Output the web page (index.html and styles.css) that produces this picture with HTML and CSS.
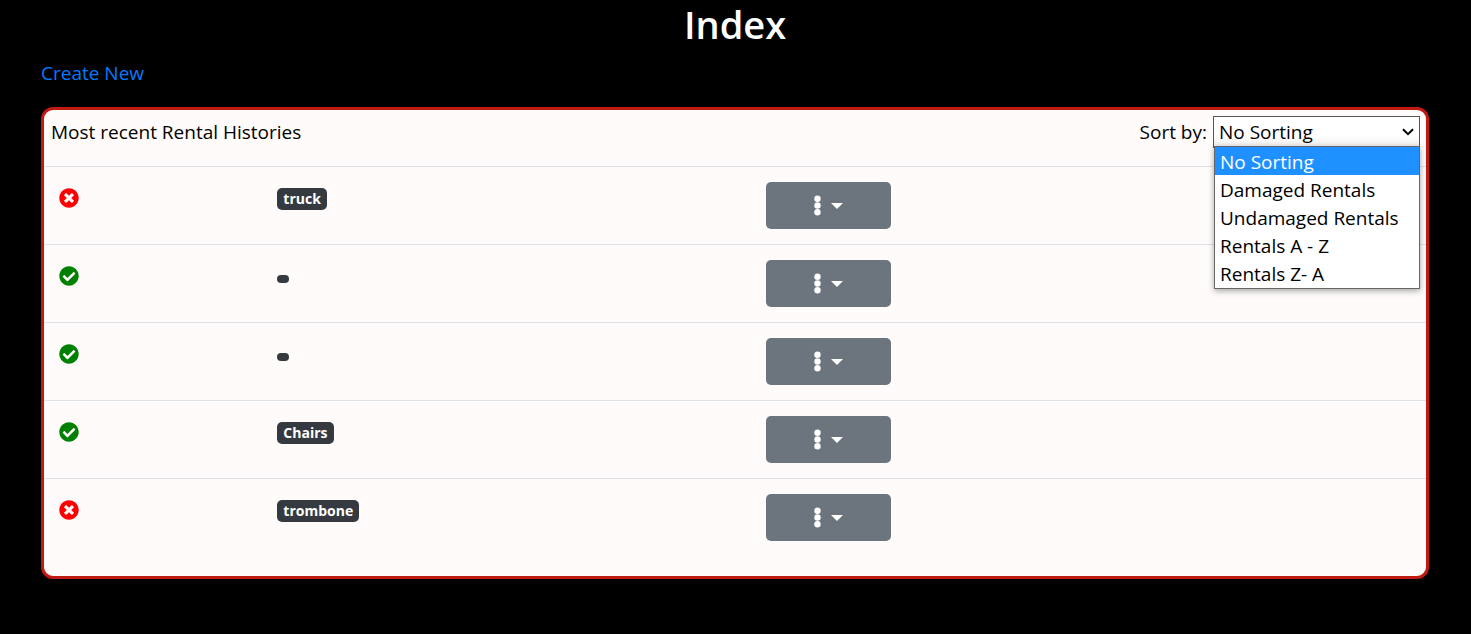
FILE: index.html
```html
<!DOCTYPE html>
<html lang="en">
<head>
<meta charset="utf-8">
<title>Index</title>
<link rel="stylesheet" href="styles.css">
</head>
<body>
<svg class="sprite" aria-hidden="true">
  <symbol id="check" viewBox="0 0 512 512"><path d="M504 256c0 136.967-111.033 248-248 248S8 392.967 8 256 119.033 8 256 8s248 111.033 248 248zM227.314 387.314l184-184c6.248-6.248 6.248-16.379 0-22.627l-22.627-22.627c-6.248-6.249-16.379-6.249-22.628 0L216 308.118l-70.059-70.059c-6.248-6.248-16.379-6.248-22.628 0l-22.627 22.627c-6.248 6.248-6.248 16.379 0 22.627l104 104c6.249 6.249 16.379 6.249 22.628.001z"/></symbol>
  <symbol id="times" viewBox="0 0 512 512"><path d="M256 8C119 8 8 119 8 256s111 248 248 248 248-111 248-248S393 8 256 8zm121.6 313.1c4.7 4.7 4.7 12.3 0 17L338 377.6c-4.7 4.7-12.3 4.7-17 0L256 312l-65.1 65.6c-4.7 4.7-12.3 4.7-17 0L134.4 338c-4.7-4.7-4.7-12.3 0-17l65.6-65-65.6-65.1c-4.7-4.7-4.7-12.3 0-17l39.6-39.6c4.7-4.7 12.3-4.7 17 0l65 65.7 65.1-65.6c4.7-4.7 12.3-4.7 17 0l39.6 39.6c4.7 4.7 4.7 12.3 0 17L312 256l65.6 65.1z"/></symbol>
  <symbol id="dots" viewBox="0 0 7 21"><circle cx="3.5" cy="3.7" r="3.2"/><circle cx="3.5" cy="10.5" r="3.2"/><circle cx="3.5" cy="17.3" r="3.2"/></symbol>
</svg>
<main class="page">
  <h1 class="title">Index</h1>
  <p class="create"><a href="#create">Create New</a></p>
  <section class="panel">
    <header class="panel-head">
      <span>Most recent Rental Histories</span>
      <div class="sort">
        <label for="sort">Sort by:</label>
        <div class="dropdown">
          <select id="sort" class="select">
            <option>No Sorting</option>
            <option>Damaged Rentals</option>
            <option>Undamaged Rentals</option>
            <option>Rentals A - Z</option>
            <option>Rentals Z- A</option>
          </select>
          <svg class="chevron" viewBox="0 0 12 8" aria-hidden="true"><path d="M1 1.2l5 5 5-5"/></svg>
          <ul class="options">
            <li class="selected">No Sorting</li>
            <li>Damaged Rentals</li>
            <li>Undamaged Rentals</li>
            <li>Rentals A - Z</li>
            <li>Rentals Z- A</li>
          </ul>
        </div>
      </div>
    </header>
    <table class="rentals">
      <colgroup><col class="col-status"><col class="col-name"><col></colgroup>
      <tbody>
        <tr>
          <td><svg class="status bad" role="img" aria-label="Damaged"><use href="#times"/></svg></td>
          <td><span class="badge">truck</span></td>
          <td><button class="actions" type="button" aria-label="Actions"><svg class="dots"><use href="#dots"/></svg><span class="caret"></span></button></td>
        </tr>
        <tr>
          <td><svg class="status good" role="img" aria-label="Undamaged"><use href="#check"/></svg></td>
          <td><span class="badge empty"></span></td>
          <td><button class="actions" type="button" aria-label="Actions"><svg class="dots"><use href="#dots"/></svg><span class="caret"></span></button></td>
        </tr>
        <tr>
          <td><svg class="status good" role="img" aria-label="Undamaged"><use href="#check"/></svg></td>
          <td><span class="badge empty"></span></td>
          <td><button class="actions" type="button" aria-label="Actions"><svg class="dots"><use href="#dots"/></svg><span class="caret"></span></button></td>
        </tr>
        <tr>
          <td><svg class="status good" role="img" aria-label="Undamaged"><use href="#check"/></svg></td>
          <td><span class="badge">Chairs</span></td>
          <td><button class="actions" type="button" aria-label="Actions"><svg class="dots"><use href="#dots"/></svg><span class="caret"></span></button></td>
        </tr>
        <tr>
          <td><svg class="status bad" role="img" aria-label="Damaged"><use href="#times"/></svg></td>
          <td><span class="badge">trombone</span></td>
          <td><button class="actions" type="button" aria-label="Actions"><svg class="dots"><use href="#dots"/></svg><span class="caret"></span></button></td>
        </tr>
      </tbody>
    </table>
  </section>
</main>
</body>
</html>
```
FILE: styles.css
```css
* { box-sizing: border-box; }

body {
  margin: 0;
  background: #000;
  color: #000;
  font: 19px/28px "Open Sans", "Noto Sans", sans-serif;
}

.sprite { display: none; }

.page { padding: 0 42px 48px 41px; }

.title {
  margin: 0;
  color: #fff;
  font-size: 38px;
  font-weight: 600;
  line-height: 48px;
  text-align: center;
}

.create { margin: 11px 0 20px; }

.create a {
  color: #007bff;
  text-decoration: none;
}

.panel {
  padding-bottom: 20px;
  border: 3px solid #c01a12;
  border-radius: 12px;
  background: #fffbfa;
}

.panel-head {
  display: flex;
  justify-content: space-between;
  padding: 6px 6px 18px 7px;
  line-height: 32px;
}

.sort {
  display: flex;
  gap: 6px;
}

.dropdown { position: relative; }

.select {
  display: block;
  width: 207px;
  height: 32px;
  padding: 0 5px;
  appearance: none;
  border: 1px solid #555;
  border-radius: 0;
  background: linear-gradient(#fff 60%, #eee);
  color: #000;
  font: inherit;
  line-height: 28px;
}

.chevron {
  position: absolute;
  top: 12px;
  right: 6px;
  width: 12px;
  height: 8px;
  fill: none;
  stroke: #000;
  stroke-width: 2;
  pointer-events: none;
}

.options {
  position: absolute;
  top: 30px;
  left: 1px;
  right: 0;
  margin: 0;
  padding: 0 0 1px;
  border: 1px solid #666;
  background: #fff;
  box-shadow: 0 2px 6px rgba(0, 0, 0, 0.35);
  line-height: 26px;
  list-style: none;
}

.options li { padding: 2px 0 0 5px; }

.options .selected {
  background: #1e90ff;
  color: #fff;
}

.rentals {
  width: 100%;
  border-collapse: collapse;
  table-layout: fixed;
}

.col-status { width: 15.8%; }
.col-name { width: 35.35%; }

.rentals tr { border-top: 1px solid #dee2e6; }

.rentals td {
  padding: 15px;
  vertical-align: top;
}

.status {
  display: block;
  width: 20px;
  height: 20px;
  margin-top: 6px;
}

.bad { fill: #f00; }
.good { fill: #008000; }

.badge {
  display: block;
  width: fit-content;
  margin-top: 6px;
  padding: 0 6px;
  border-radius: 5px;
  background: #343a40;
  color: #fff;
  font-size: 14px;
  font-weight: 700;
  line-height: 22px;
}

.empty {
  height: 8px;
  margin-top: 15px;
}

.actions {
  display: flex;
  align-items: center;
  justify-content: center;
  gap: 10px;
  width: 125px;
  height: 47px;
  padding: 0;
  border: 0;
  border-radius: 5px;
  background: #6c757d;
}

.dots {
  width: 7px;
  height: 21px;
  fill: #fff;
}

.caret {
  border: 6px solid transparent;
  border-top-color: #fff;
  border-bottom: 0;
}
```
